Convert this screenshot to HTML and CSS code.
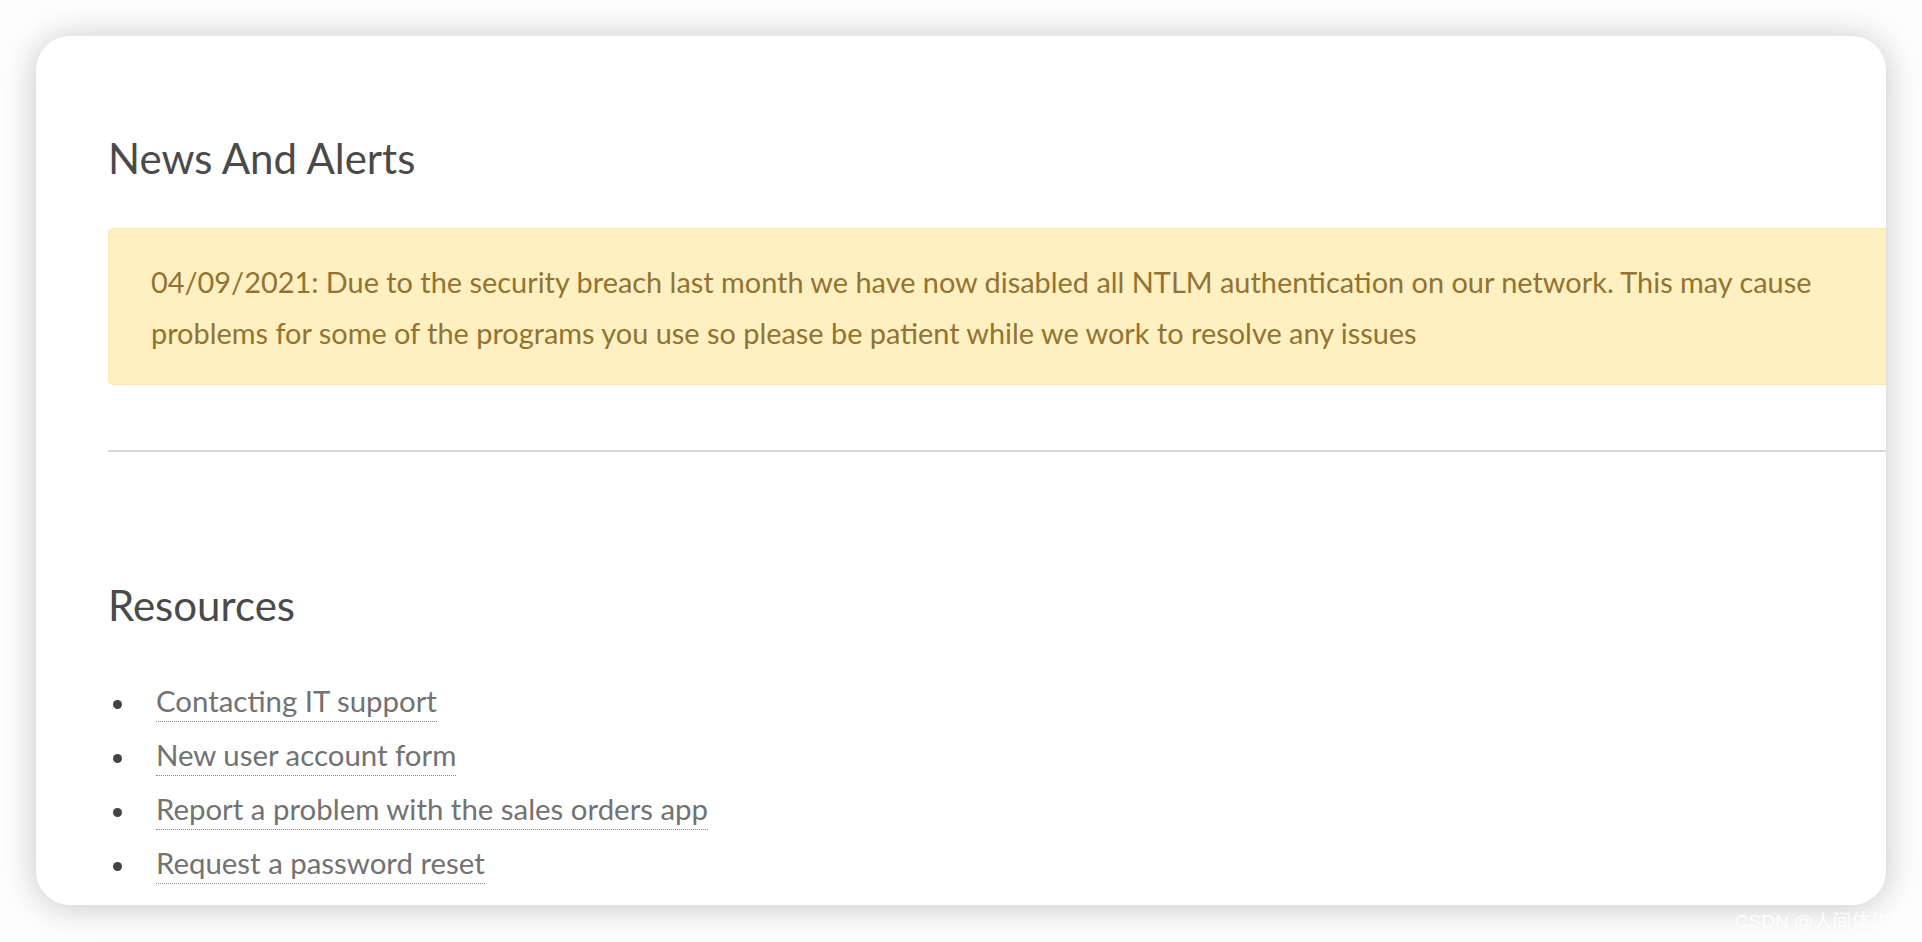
FILE: index.html
```html
<!DOCTYPE html>
<html lang="en">
<head>
    <meta charset="UTF-8">
    <title>News And Alerts</title>
    <link rel="stylesheet" href="styles.css">
</head>
<body>
    <div class="card">
        <div class="content">
            <h2 class="section-title">News And Alerts</h2>
            <div class="alert">
                04/09/2021: Due to the security breach last month we have now disabled all NTLM authentication on our network. This may cause problems for some of the programs you use so please be patient while we work to resolve any issues
            </div>

            <hr class="divider">

            <h2 class="section-title resources-title">Resources</h2>
            <ul class="resources">
                <li><span class="bullet"></span><a href="#">Contacting IT support</a></li>
                <li><span class="bullet"></span><a href="#">New user account form</a></li>
                <li><span class="bullet"></span><a href="#">Report a problem with the sales orders app</a></li>
                <li><span class="bullet"></span><a href="#">Request a password reset</a></li>
            </ul>
        </div>
    </div>
    <div class="watermark">CSDN @人间体佐菲</div>
</body>
</html>
```

FILE: styles.css
```css
body {
    margin: 0;
    padding: 36px;
    background-color: #fdfdfd;
    font-family: Lato, "Open Sans", sans-serif;
    color: #4a4a4a;
    height: 942px;
    box-sizing: border-box;
    overflow: hidden;
    position: relative;
}
.card {
    background-color: #fff;
    height: 869px;
    border-radius: 34px;
    box-shadow: 0 2px 34px rgba(0, 0, 0, 0.22);
    overflow: hidden;
    padding: 97px 0 0 72px;
    box-sizing: border-box;
}
.content {
    width: 1800px;
}
.section-title {
    margin: 0;
    font-size: 42px;
    line-height: 50px;
    font-weight: 400;
    color: #4a4a4a;
}
.alert {
    margin-top: 45px;
    padding: 27px 42px 26px 42px;
    background-color: #fff0c1;
    border: 1px solid #ffe8a3;
    border-radius: 5px;
    color: #927331;
    font-size: 28.9px;
    line-height: 51px;
}
.divider {
    margin: 65px 0 0 0;
    border: none;
    border-top: 2px solid #dadada;
}
.resources-title {
    margin-top: 128px;
}
.resources {
    list-style: none;
    margin: 44px 0 0 0;
    padding: 0;
}
.resources li {
    font-size: 29.4px;
    line-height: 54px;
}
.bullet {
    display: inline-block;
    width: 9px;
    height: 9px;
    border-radius: 50%;
    background-color: #444;
    vertical-align: middle;
    margin: 0 34px 0 5px;
}
.resources a {
    color: #727272;
    text-decoration: none;
    border-bottom: 1px dotted #8a8a8a;
    padding-bottom: 3px;
}
.watermark {
    position: absolute;
    left: 1735px;
    top: 906px;
    font-family: "Liberation Sans", "Noto Sans CJK SC", sans-serif;
    font-size: 19px;
    color: rgba(255, 255, 255, 0.9);
    white-space: nowrap;
}
```
